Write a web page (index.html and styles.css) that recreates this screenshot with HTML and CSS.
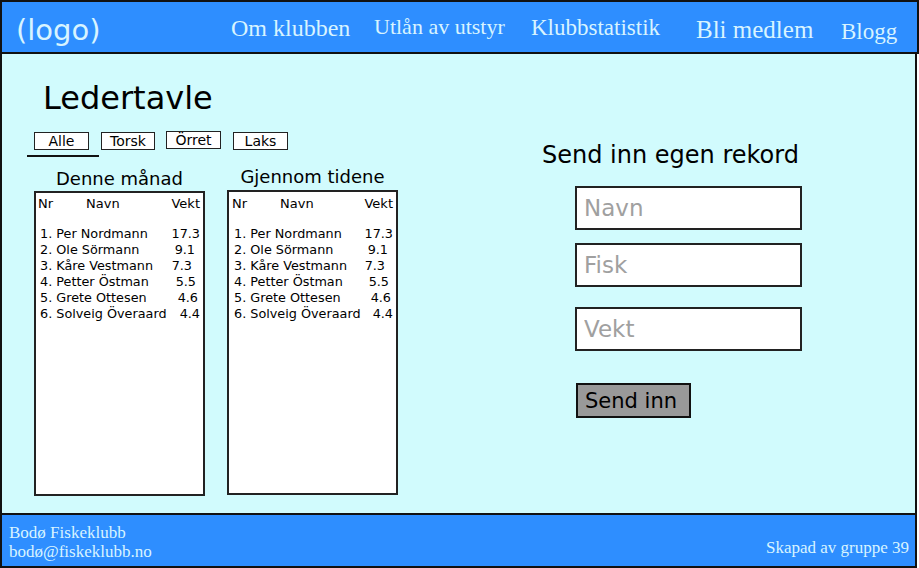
FILE: index.html
```html
<!DOCTYPE html>
<html lang="no">
<head>
<meta charset="utf-8">
<title>Bodø Fiskeklubb</title>
<link rel="stylesheet" href="styles.css">
</head>
<body>
<div class="page">
  <header class="top">
    <div class="logo">(logo)</div>
    <nav class="nav">
      <a class="nav-item n1">Om klubben</a>
      <a class="nav-item n2">Utlån av utstyr</a>
      <a class="nav-item n3">Klubbstatistik</a>
      <a class="nav-item n4">Bli medlem</a>
      <a class="nav-item n5">Blogg</a>
    </nav>
  </header>
  <main class="main">
    <section class="board">
      <h1 class="title">Ledertavle</h1>
      <div class="tabs">
        <span class="tab">Alle</span>
        <span class="tab tab-narrow">Torsk</span>
        <span class="tab tab-up">Örret</span>
        <span class="tab">Laks</span>
      </div>
      <div class="underline"></div>
      <div class="lists">
        <div class="list">
          <h2 class="list-title">Denne månad</h2>
          <div class="list-box">
            <div class="list-head"><span class="h-nr">Nr</span><span class="h-navn">Navn</span><span class="h-vekt">Vekt</span></div>
            <div class="rows">
              <div class="row"><span>1. Per Nordmann</span><span class="w">17.3</span></div>
              <div class="row"><span>2. Ole Sörmann</span><span class="w w2">9.1</span></div>
              <div class="row"><span>3. Kåre Vestmann</span><span class="w w3">7.3</span></div>
              <div class="row"><span>4. Petter Östman</span><span class="w w4">5.5</span></div>
              <div class="row"><span>5. Grete Ottesen</span><span class="w w5">4.6</span></div>
              <div class="row"><span>6. Solveig Överaard</span><span class="w">4.4</span></div>
            </div>
          </div>
        </div>
        <div class="list list-2">
          <h2 class="list-title">Gjennom tidene</h2>
          <div class="list-box">
            <div class="list-head"><span class="h-nr">Nr</span><span class="h-navn">Navn</span><span class="h-vekt">Vekt</span></div>
            <div class="rows">
              <div class="row"><span>1. Per Nordmann</span><span class="w">17.3</span></div>
              <div class="row"><span>2. Ole Sörmann</span><span class="w w2">9.1</span></div>
              <div class="row"><span>3. Kåre Vestmann</span><span class="w w3">7.3</span></div>
              <div class="row"><span>4. Petter Östman</span><span class="w w4">5.5</span></div>
              <div class="row"><span>5. Grete Ottesen</span><span class="w w5">4.6</span></div>
              <div class="row"><span>6. Solveig Överaard</span><span class="w">4.4</span></div>
            </div>
          </div>
        </div>
      </div>
    </section>
    <section class="submit">
      <h2 class="submit-title">Send inn egen rekord</h2>
      <form class="form">
        <input class="field" type="text" placeholder="Navn">
        <input class="field f-fisk" type="text" placeholder="Fisk">
        <input class="field f-vekt" type="text" placeholder="Vekt">
        <button class="send" type="button">Send inn</button>
      </form>
    </section>
  </main>
  <footer class="foot">
    <div class="foot-left">
      <div>Bodø Fiskeklubb</div>
      <div>bodø@fiskeklubb.no</div>
    </div>
    <div class="foot-right">Skapad av gruppe 39</div>
  </footer>
</div>
</body>
</html>
```

FILE: styles.css
```css
* { box-sizing: border-box; }
html, body { margin: 0; padding: 0; background: #ffffff; }
body { font-family: "DejaVu Sans", sans-serif; color: #000; }
.page { width: 919px; height: 568px; overflow: hidden; }

.top {
  width: 919px;
  height: 54px;
  background: #2e8eff;
  border: 2px solid #111;
  display: flex;
  align-items: flex-start;
}
.logo {
  font-family: "DejaVu Sans", sans-serif;
  font-size: 29px;
  line-height: 34px;
  color: #d8f4ff;
  padding: 11px 0 0 14px;
  width: 229px;
}
.nav {
  display: grid;
  grid-template-columns: 143px 157px 165px 145px auto;
  align-items: start;
}
.nav-item {
  font-family: "Liberation Serif", serif;
  color: #d8f4ff;
  line-height: 1;
  white-space: nowrap;
}
.n1 { font-size: 24px; padding-top: 14px; }
.n2 { font-size: 22px; padding-top: 14px; }
.n3 { font-size: 23px; padding-top: 14px; }
.n4 { font-size: 25px; padding-top: 15px; }
.n5 { font-size: 23px; padding-top: 18px; }

.main {
  width: 917px;
  height: 459px;
  background: #d1fbfd;
  border-left: 2px solid #111;
  border-right: 2px solid #111;
  display: flex;
}
.board { width: 540px; padding: 25px 0 0 25px; }
.title {
  margin: 0 0 15px 16px;
  font-size: 32px;
  line-height: 38px;
  font-weight: normal;
}
.tabs { display: flex; gap: 12px; margin-left: 7px; align-items: flex-start; }
.tab {
  width: 55px;
  height: 18px;
  background: #fff;
  border: 1px solid #222;
  font-size: 14px;
  line-height: 16px;
  text-align: center;
}
.tab-narrow { width: 54px; }
.tab-up { margin-top: -1px; margin-left: -1px; }
.underline {
  width: 72px;
  height: 2px;
  background: #111;
  margin-top: 5px;
}
.lists { display: flex; gap: 22px; margin-left: 7px; margin-top: 11px; }
.list { width: 171px; }
.list-title {
  margin: 0 0 2px;
  font-size: 18px;
  line-height: 21px;
  font-weight: normal;
  text-align: center;
}
.list-box {
  height: 305px;
  background: #fff;
  border: 2px solid #222;
  padding: 3px 3px 0 2px;
}
.list-2 .list-title { margin-top: -2px; margin-bottom: 3px; }
.list-2 .list-box { padding-top: 4px; padding-left: 3px; }
.list-head { display: flex; font-size: 13px; line-height: 16px; }
.h-nr { width: 48px; }
.h-vekt { margin-left: auto; }
.rows { margin-top: 14px; padding-left: 2px; }
.row { display: flex; font-size: 12.8px; line-height: 16px; white-space: nowrap; }
.row .w { margin-left: auto; }
.row .w2 { margin-right: 5px; }
.row .w3 { margin-right: 8px; }
.row .w4 { margin-right: 4px; }
.row .w5 { margin-right: 2px; }

.submit { flex: 1; padding-top: 87px; }
.submit-title {
  margin: 0;
  font-size: 24px;
  line-height: 28px;
  font-weight: normal;
}
.form { display: flex; flex-direction: column; align-items: flex-start; padding-left: 33px; margin-top: 17px; }
.field {
  width: 227px;
  height: 44px;
  background: #fff;
  border: 2px solid #222;
  border-radius: 0;
  padding: 0 7px;
  font-family: "DejaVu Sans", sans-serif;
  font-size: 23px;
  outline: none;
}
.field::placeholder { color: #a0a0a0; }
.f-fisk { margin-top: 13px; }
.f-vekt { margin-top: 20px; }
.send {
  margin-top: 32px;
  margin-left: 1px;
  width: 115px;
  height: 35px;
  background: #999;
  border: 2px solid #111;
  border-radius: 0;
  padding: 0 0 0 7px;
  text-align: left;
  font-family: "DejaVu Sans", sans-serif;
  font-size: 21px;
  color: #000;
}

.foot {
  width: 917px;
  height: 55px;
  background: #2e8eff;
  border: 2px solid #111;
  display: flex;
  justify-content: space-between;
  align-items: flex-start;
  font-family: "Liberation Serif", serif;
  font-size: 17px;
  line-height: 19px;
  color: #d8f4ff;
  padding: 8px 6px 0 7px;
}
.foot-right { margin-top: 15px; }
```
